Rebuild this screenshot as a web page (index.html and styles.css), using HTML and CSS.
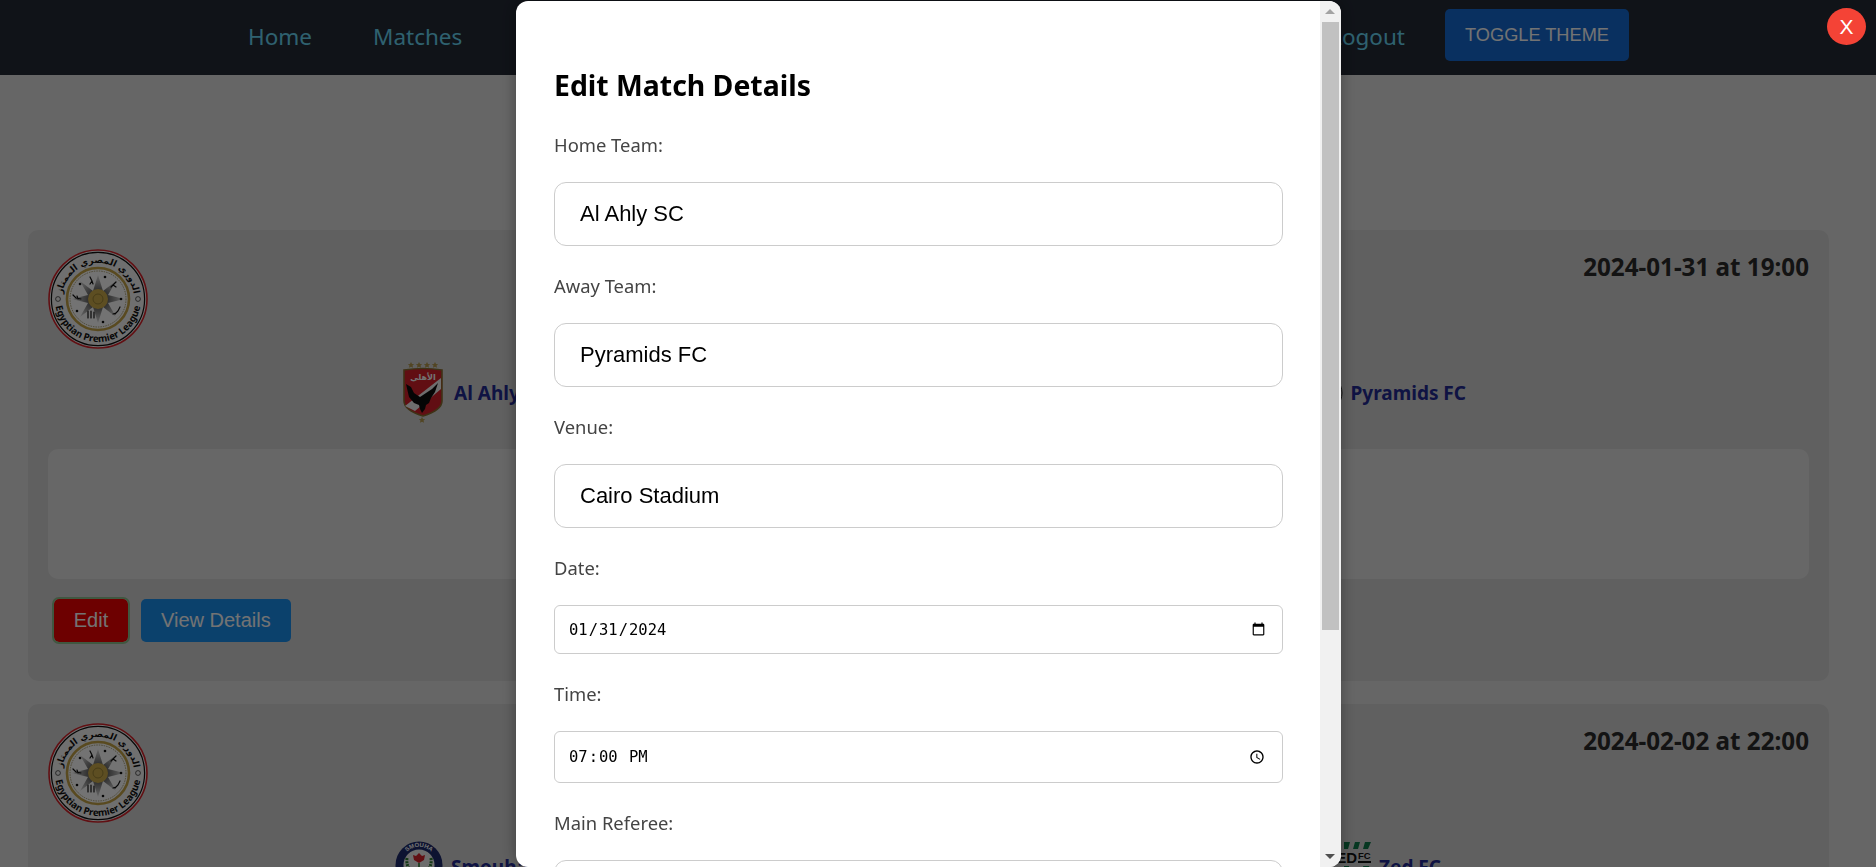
FILE: index.html
```html
<!DOCTYPE html>
<html lang="en">
<head>
    <meta charset="UTF-8">
    <meta name="viewport" content="width=device-width, initial-scale=1.0">
    <title>Edit Match Details</title>
    <link rel="stylesheet" href="styles.css">
</head>
<body>

<svg class="defs" width="0" height="0">
    <defs>
        <path id="arcTop" d="M14,50 A36,36 0 0 1 86,50"/>
        <path id="arcBottom" d="M7,50 A43,43 0 0 0 93,50"/>
        <path id="ringTop" d="M6,24 A18,18 0 0 1 42,24"/>
        <radialGradient id="starFade">
            <stop offset="0.2" stop-color="#4a4a4a"/>
            <stop offset="1" stop-color="#e4e4e4"/>
        </radialGradient>
        <symbol id="leagueBadge" viewBox="0 0 100 100">
            <circle cx="50" cy="50" r="49" fill="#f5f5f5" stroke="#d8232a" stroke-width="1.6"/>
            <circle cx="50" cy="50" r="46.6" fill="none" stroke="#111" stroke-width="1.2"/>
            <text class="badge-ar"><textPath href="#arcTop" startOffset="50%" text-anchor="middle">الدوري المصري الممتاز</textPath></text>
            <text class="badge-en"><textPath href="#arcBottom" startOffset="50%" text-anchor="middle">Egyptian Premier League</textPath></text>
            <circle cx="10" cy="50" r="2.4" fill="none" stroke="#222" stroke-width=".7"/>
            <circle cx="90" cy="50" r="2.4" fill="none" stroke="#222" stroke-width=".7"/>
            <circle cx="50" cy="50" r="31" fill="#fff" stroke="#c6a548" stroke-width="2.6"/>
            <circle cx="50" cy="50" r="28" fill="none" stroke="#8a7a3a" stroke-width=".7" stroke-dasharray="1.5 1"/>
            <polygon points="50,26 55,42 68,32 60,46 76,50 60,54 68,68 55,58 50,74 45,58 32,68 40,54 24,50 40,46 32,32 45,42" fill="url(#starFade)"/>
            <circle cx="50" cy="50" r="10" fill="#cfae4c"/>
            <circle cx="50" cy="50" r="5" fill="none" stroke="#9c8436" stroke-width="1"/>
            <g fill="#111">
                <circle cx="57" cy="28" r="1.3"/>
                <circle cx="73" cy="50" r="1.3"/>
                <circle cx="55" cy="73" r="1.3"/>
                <circle cx="29" cy="62" r="1.3"/>
                <circle cx="32" cy="35" r="1.3"/>
            </g>
            <g fill="none" stroke="#111" stroke-width="1.2" stroke-linecap="round">
                <path d="M42,28 l2,4 1,3 m-1,-3 l-2,3"/>
                <path d="M68,33 l-3,3 -2,2 m2,-2 l3,2"/>
                <path d="M25,46 l3,3 5,1 m-3,0 l-1,-3"/>
                <path d="M72,58 l-2,4 -3,3 m1,-1 l-3,1"/>
                <path d="M40,62 v7 m3,-7 v7 m3,-6 v6"/>
            </g>
        </symbol>
    </defs>
</svg>

<nav class="navbar">
    <div class="nav-links">
        <a href="#">Home</a>
        <a href="#">Matches</a>
    </div>
    <div class="nav-right">
        <a href="#">Logout</a>
        <button class="theme-btn">Toggle Theme</button>
    </div>
</nav>

<main class="matches">
    <section class="match-card">
        <div class="match-top">
            <svg class="league-logo"><use href="#leagueBadge"/></svg>
            <div class="match-date">2024-01-31 at 19:00</div>
        </div>
        <div class="teams teams-first">
            <div class="team">
                <svg class="team-logo" width="40" height="61" viewBox="0 0 40 61">
                    <g fill="#b59a4e">
                        <path d="M8,0 l1,2 2.2,.2 -1.7,1.4 .6,2.2 -2.1,-1.1 -2.1,1.1 .6,-2.2 -1.7,-1.4 2.2,-.2z"/>
                        <path d="M16,0 l1,2 2.2,.2 -1.7,1.4 .6,2.2 -2.1,-1.1 -2.1,1.1 .6,-2.2 -1.7,-1.4 2.2,-.2z"/>
                        <path d="M24,0 l1,2 2.2,.2 -1.7,1.4 .6,2.2 -2.1,-1.1 -2.1,1.1 .6,-2.2 -1.7,-1.4 2.2,-.2z"/>
                        <path d="M32,0 l1,2 2.2,.2 -1.7,1.4 .6,2.2 -2.1,-1.1 -2.1,1.1 .6,-2.2 -1.7,-1.4 2.2,-.2z"/>
                        <path d="M19,55 l1,2 2.2,.2 -1.7,1.4 .6,2.2 -2.1,-1.1 -2.1,1.1 .6,-2.2 -1.7,-1.4 2.2,-.2z"/>
                    </g>
                    <path d="M1,8 Q20,5 39,8 V39 Q39,48 20,54 Q1,48 1,39Z" fill="#d8202a" stroke="#8a6f32" stroke-width="1.6"/>
                    <polygon points="2,44 38,16 38,27 12,49" fill="#f4f4f4"/>
                    <path d="M3,22 L8,25 L11,31 L17,35 L23,31 L29,27 L35,21 L32,30 L28,36 L26,41 L23,43 L22,47 L19,51 L17,47 L16,43 L11,41 L6,35Z" fill="#0c0c0c"/>
                    <text class="crest-ar" x="20" y="18" text-anchor="middle">الأهلي</text>
                </svg>
                <span>Al Ahly SC</span>
            </div>
            <div class="team team-gap-small">
                <svg class="team-logo" width="40" height="40" viewBox="0 0 40 40">
                    <circle cx="20" cy="20" r="19" fill="none" stroke="#222" stroke-width="1"/>
                </svg>
                <span>Pyramids FC</span>
            </div>
        </div>
        <div class="match-info"></div>
        <div class="card-actions">
            <button class="btn btn-edit">Edit</button>
            <button class="btn btn-view">View Details</button>
        </div>
    </section>

    <section class="match-card">
        <div class="match-top">
            <svg class="league-logo"><use href="#leagueBadge"/></svg>
            <div class="match-date">2024-02-02 at 22:00</div>
        </div>
        <div class="teams teams-second">
            <div class="team team-gap-small">
                <svg class="team-logo" width="48" height="52" viewBox="0 0 48 52">
                    <circle cx="24" cy="24" r="23.5" fill="#1d2a6e"/>
                    <circle cx="24" cy="24" r="15.5" fill="#f2f2f2"/>
                    <text class="crest-ring"><textPath href="#ringTop" startOffset="50%" text-anchor="middle">SMOUHA</textPath></text>
                    <path d="M24,12 l3,3 3,-1 -1,5 -5,3 -5,-3 -1,-5 3,1z" fill="#d8232a"/>
                    <path d="M24,22 V34" stroke="#2e7d32" stroke-width="1.6"/>
                    <path d="M12,17 q-1,8 4,13 M36,17 q1,8 -4,13" fill="none" stroke="#2e7d32" stroke-width="3" stroke-dasharray="2 1"/>
                </svg>
                <span>Smouha SC</span>
            </div>
            <div class="team team-gap-small">
                <svg class="team-logo" width="48" height="52" viewBox="0 0 48 52">
                    <g fill="#0f7a4a">
                        <polygon points="21,1 27,1 25,8 21,8"/>
                        <polygon points="32,1 37,1 35,8 30,8"/>
                        <polygon points="42,1 48,1 45,8 40,8"/>
                        <polygon points="21,25 26,25 26,32 21,32"/>
                        <polygon points="40,25 46,25 48,32 42,32"/>
                    </g>
                    <text class="crest-zed" x="4" y="22">ZED</text>
                    <text class="crest-fc" x="35" y="18">FC</text>
                    <rect x="35" y="20" width="13" height="2" fill="#111"/>
                </svg>
                <span>Zed FC</span>
            </div>
        </div>
    </section>
</main>

<div class="overlay">
    <div class="modal">
        <div class="modal-body">
            <h2>Edit Match Details</h2>
            <form>
                <div class="form-group">
                    <label for="homeTeam">Home Team:</label>
                    <input class="text-input" type="text" id="homeTeam" value="Al Ahly SC">
                </div>
                <div class="form-group">
                    <label for="awayTeam">Away Team:</label>
                    <input class="text-input" type="text" id="awayTeam" value="Pyramids FC">
                </div>
                <div class="form-group">
                    <label for="venue">Venue:</label>
                    <input class="text-input" type="text" id="venue" value="Cairo Stadium">
                </div>
                <div class="form-group">
                    <label for="matchDate">Date:</label>
                    <input class="date-input" type="date" id="matchDate" value="2024-01-31">
                </div>
                <div class="form-group">
                    <label for="matchTime">Time:</label>
                    <input class="time-input" type="time" id="matchTime" value="19:00">
                </div>
                <div class="form-group">
                    <label for="mainReferee">Main Referee:</label>
                    <input class="text-input" type="text" id="mainReferee">
                </div>
            </form>
        </div>
        <div class="scrollbar">
            <span class="arrow-up"></span>
            <div class="scroll-thumb"></div>
            <span class="arrow-down"></span>
        </div>
    </div>
    <button class="close-btn">X</button>
</div>

</body>
</html>
```

FILE: styles.css
```css
* {
    box-sizing: border-box;
}
body {
    font-family: "Noto Sans", "Open Sans", sans-serif;
    background-color: #e3e3e3;
    color: #2a2a2a;
    margin: 0;
    height: 867px;
    overflow: hidden;
}
.defs {
    display: block;
    height: 0;
}
.navbar {
    height: 75px;
    background-color: #242a36;
    display: flex;
    justify-content: space-between;
    padding: 0 247px 0 248px;
}
.navbar a {
    color: #68d8f5;
    font-size: 22.5px;
    text-decoration: none;
    line-height: 73px;
}
.nav-links {
    display: flex;
    gap: 61px;
}
.nav-right {
    display: flex;
    gap: 40px;
}
.theme-btn {
    width: 184px;
    height: 52px;
    margin-top: 9px;
    padding: 0;
    background-color: #166bd5;
    color: #fff;
    border: none;
    border-radius: 5px;
    font-family: "Liberation Sans", Arial, sans-serif;
    font-size: 18.2px;
    text-transform: uppercase;
}
.matches {
    padding: 155px 47px 0 28px;
}
.match-card {
    height: 451px;
    background-color: #d5d5d5;
    border-radius: 10px;
    padding: 19px 20px 0;
    margin-bottom: 23px;
}
.match-top {
    display: flex;
    justify-content: space-between;
    height: 100px;
}
.league-logo {
    width: 100px;
    height: 100px;
}
.match-date {
    font-size: 24.2px;
    font-weight: 700;
    line-height: 36px;
}
.teams {
    display: flex;
    justify-content: space-between;
    height: 61px;
    margin-top: 13px;
}
.teams-first {
    padding: 0 343px 0 355px;
}
.teams-second {
    padding: 0 368px 0 347px;
}
.team {
    display: flex;
    align-items: center;
    gap: 11px;
    font-size: 19px;
    font-weight: 700;
    color: #232a94;
}
.team-gap-small {
    gap: 8px;
}
.team-logo {
    flex-shrink: 0;
}
.match-info {
    height: 130px;
    margin-top: 26px;
    background-color: #e5e5e5;
    border-radius: 10px;
}
.card-actions {
    display: flex;
    gap: 13px;
    margin: 20px 0 0 6px;
}
.btn {
    height: 43px;
    border: none;
    border-radius: 5px;
    color: #fff;
    font-family: "Liberation Sans", Arial, sans-serif;
    font-size: 20px;
}
.btn-edit {
    width: 74px;
    padding: 0;
    background-color: #f20000;
    outline: 2px solid #8fc08f;
}
.btn-view {
    padding: 0 20px;
    background-color: #1a90f0;
}
.overlay {
    position: fixed;
    top: 0;
    left: 0;
    width: 100%;
    height: 100%;
    background-color: rgba(0, 0, 0, 0.55);
    display: flex;
    justify-content: center;
    padding: 1px 19px 0 0;
}
.modal {
    width: 825px;
    height: 866px;
    background-color: #fff;
    border-radius: 12px;
    box-shadow: 0 0 16px rgba(0, 0, 0, 0.35);
    display: flex;
    overflow: hidden;
}
.modal-body {
    width: 804px;
    height: 866px;
    padding: 64px 37px 0 38px;
    overflow: hidden;
    color: #444;
}
.modal-body h2 {
    margin: 0 0 27px;
    color: #000;
    font-size: 28.4px;
    line-height: 40px;
}
.form-group {
    margin-bottom: 27px;
}
.form-group label {
    display: block;
    height: 26px;
    line-height: 25px;
    margin-bottom: 24px;
    font-size: 18.4px;
}
.form-group input {
    display: block;
    width: 100%;
    border: 1px solid #ccc;
    background-color: #fff;
    color: #000;
}
.text-input {
    height: 64px;
    padding: 0 25px;
    border-radius: 12px;
    font-family: "Liberation Sans", Arial, sans-serif;
    font-size: 22px;
}
.date-input,
.time-input {
    padding: 0 14px 0 13px;
    border-radius: 6px;
    font-family: "DejaVu Sans Mono", monospace;
    font-size: 15.5px;
}
.date-input {
    height: 49px;
}
.time-input {
    height: 52px;
}
.scrollbar {
    width: 21px;
    background-color: #f1f1f1;
    position: relative;
}
.scroll-thumb {
    position: absolute;
    top: 21px;
    left: 2px;
    width: 17px;
    height: 608px;
    background-color: #c1c1c1;
}
.arrow-up,
.arrow-down {
    position: absolute;
    left: 5px;
    width: 0;
    height: 0;
    border-left: 5px solid transparent;
    border-right: 5px solid transparent;
}
.arrow-up {
    top: 8px;
    border-bottom: 5px solid #a3a3a3;
}
.arrow-down {
    bottom: 8px;
    border-top: 5px solid #505050;
}
.close-btn {
    position: absolute;
    top: 8px;
    left: 1827px;
    width: 39px;
    height: 37px;
    padding: 0;
    border: none;
    border-radius: 50%;
    background-color: #f44336;
    color: #fff;
    font-family: "Liberation Sans", Arial, sans-serif;
    font-size: 21px;
}
.badge-ar {
    font-family: "DejaVu Sans", sans-serif;
    font-size: 9px;
    font-weight: 700;
    fill: #111;
}
.badge-en {
    font-family: "Noto Sans", sans-serif;
    font-size: 9.6px;
    font-weight: 700;
    fill: #111;
}
.crest-ar {
    font-family: "DejaVu Sans", sans-serif;
    font-size: 8px;
    fill: #fff;
}
.crest-ring {
    font-family: "Liberation Sans", sans-serif;
    font-size: 6px;
    font-weight: 700;
    fill: #fff;
}
.crest-zed {
    font-family: "Liberation Sans", sans-serif;
    font-size: 15px;
    font-weight: 700;
    fill: #111;
}
.crest-fc {
    font-family: "Liberation Sans", sans-serif;
    font-size: 9.5px;
    font-weight: 700;
    fill: #111;
}
```
